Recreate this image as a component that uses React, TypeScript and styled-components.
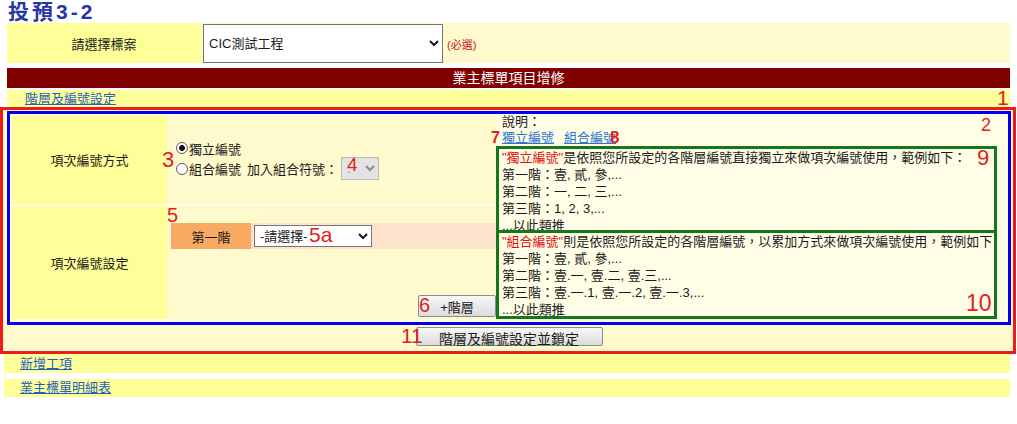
import React from "react";
import styled, { createGlobalStyle } from "styled-components";

const GlobalStyle = createGlobalStyle`
  html, body { margin: 0; padding: 0; background: #ffffff; }
  body {
    font-family: "Liberation Sans", "Noto Sans CJK TC", sans-serif;
    font-size: 13px;
    color: #1a1a1a;
  }
  * { box-sizing: border-box; }
`;

const FONT = `"Liberation Sans", "Noto Sans CJK TC", sans-serif`;

const Page = styled.div`
  position: relative;
  width: 1017px;
  height: 424px;
  padding: 0 7px;
  overflow: hidden;
`;

const Title = styled.h1`
  margin: 0 0 0 1px;
  height: 23px;
  line-height: 23px;
  font-size: 21px;
  font-weight: 700;
  letter-spacing: 3px;
  color: #2636a6;
`;

const ProjectRow = styled.div`
  display: grid;
  grid-template-columns: 194px 1fr;
  height: 40px;
`;

const YellowLabel = styled.div`
  background: #ffff99;
  display: flex;
  align-items: center;
  justify-content: center;
`;

const ProjectField = styled.div`
  background: #fffacd;
  display: flex;
  align-items: flex-start;
  gap: 4px;
  padding: 1px 0 0 2px;
`;

const NativeSelect = styled.select<{ $w: number; $h: number }>`
  width: ${(p) => p.$w}px;
  height: ${(p) => p.$h}px;
  font-family: ${FONT};
  font-size: 13px;
  color: #1a1a1a;
  background-color: #ffffff;
  border: 1px solid #767676;
  border-radius: 0;
  padding: 0 1px;
  margin: 0;
`;

const SymbolSelect = styled(NativeSelect)`
  background-color: #e3e3e3;
  border-color: #b9b9b9;
  color: #8a8a8a;
  margin-left: 3px;
`;

const Required = styled.span`
  align-self: center;
  font-size: 11px;
  color: #cc1616;
`;

const HeaderBar = styled.div`
  margin-top: 5px;
  height: 20px;
  line-height: 20px;
  background: #800000;
  color: #ffffff;
  font-size: 14px;
  text-align: center;
`;

const LinkRow = styled.div<{ $indent: number; $h: number; $top: number; $shift?: number }>`
  margin-top: ${(p) => p.$top}px;
  margin-left: ${(p) => -(p.$shift || 0)}px;
  height: ${(p) => p.$h}px;
  line-height: ${(p) => p.$h}px;
  background: #ffff99;
  padding-left: ${(p) => p.$indent}px;
`;

const Link = styled.a`
  color: #1f5fc0;
  text-decoration: underline;
  cursor: pointer;
`;

const RedFrame = styled.section`
  margin: 0 -6px 0 -7px;
  border: 3px solid #ee1b1b;
  padding: 1px 2px 0 4px;
  background: #fffacd;
`;

const BlueFrame = styled.div`
  border: 3px solid #0000ee;
  background: #fffde6;
  padding: 1px 3px 3px 2px;
  display: grid;
  grid-template-columns: 155px 329px 1fr;
  grid-template-rows: 89px 113px;
  row-gap: 2px;
`;

const SettingLabel = styled(YellowLabel)<{ $row: number }>`
  grid-column: 1;
  grid-row: ${(p) => p.$row};
`;

const ModeCell = styled.div`
  grid-column: 2;
  grid-row: 1;
  background: #fffacd;
  display: flex;
  flex-direction: column;
  justify-content: center;
  padding-left: 9px;
`;

const ModeLine = styled.label<{ $h: number }>`
  display: flex;
  align-items: center;
  height: ${(p) => p.$h}px;
  white-space: nowrap;
`;

const Radio = styled.input`
  appearance: none;
  width: 12px;
  height: 12px;
  margin: 0 1px 0 0;
  border: 1px solid #5c5c5c;
  border-radius: 50%;
  background: #ffffff;
  &:checked {
    background: radial-gradient(circle, #111 0 2.6px, #fff 3.2px);
  }
`;

const Spaced = styled.span`
  margin-left: 6px;
`;

const LevelCell = styled.div`
  grid-column: 2;
  grid-row: 2;
  background: #fffacd;
  display: flex;
  flex-direction: column;
  justify-content: space-between;
  padding: 17px 0 2px 4px;
`;

const LevelRow = styled.div`
  display: flex;
  align-items: center;
  height: 26px;
  background: #fde3cb;
`;

const LevelTag = styled.div`
  width: 80px;
  height: 100%;
  background: #f9aa62;
  display: flex;
  align-items: center;
  justify-content: center;
  margin-right: 3px;
`;

const GreyButton = styled.button<{ $w: number; $h: number; $fs: number }>`
  width: ${(p) => p.$w}px;
  height: ${(p) => p.$h}px;
  font-family: ${FONT};
  font-size: ${(p) => p.$fs}px;
  color: #1a1a1a;
  padding: 0;
  background: linear-gradient(#f7f7f7, #dcdcdc);
  border: 1px solid #8c8c8c;
  border-radius: 2px;
`;

const AddLevel = styled(GreyButton)`
  align-self: flex-end;
`;

const Explain = styled.div`
  grid-column: 3;
  grid-row: 1 / span 2;
  margin-top: -1px;
  display: flex;
  flex-direction: column;
  align-items: flex-start;
`;

const ExplainLine = styled.div`
  padding-left: 6px;
  line-height: 16px;
  height: 16px;
  display: flex;
  gap: 10px;
`;

const ExplainLink = styled.a`
  color: #2b72d2;
  text-decoration: underline;
`;

const GreenBox = styled.div<{ $h: number; $open?: boolean }>`
  width: 501px;
  height: ${(p) => p.$h}px;
  border: 3px solid #14781a;
  border-bottom-width: ${(p) => (p.$open ? 0 : 3)}px;
  padding-left: 3px;
  line-height: 17px;
  white-space: nowrap;
  overflow: hidden;
`;

const Hot = styled.span`
  color: #e01010;
`;

const LockRow = styled.div`
  display: flex;
  justify-content: center;
  padding: 2px 0 5px;
`;

const Marker = styled.span<{ $x: number; $y: number; $size: number; $bold?: boolean }>`
  position: absolute;
  left: ${(p) => p.$x}px;
  top: ${(p) => p.$y}px;
  font-family: "Liberation Sans", sans-serif;
  font-size: ${(p) => p.$size}px;
  font-weight: ${(p) => (p.$bold ? 700 : 400)};
  line-height: 1;
  color: #e3201b;
  pointer-events: none;
`;

const markers: { t: string; x: number; y: number; s: number; b?: boolean }[] = [
  { t: "1", x: 997, y: 87, s: 21 },
  { t: "2", x: 981, y: 116, s: 18 },
  { t: "3", x: 162, y: 149, s: 22 },
  { t: "4", x: 347, y: 155, s: 19 },
  { t: "5", x: 167, y: 205, s: 20 },
  { t: "5a", x: 309, y: 224, s: 21 },
  { t: "6", x: 419, y: 295, s: 20 },
  { t: "7", x: 491, y: 130, s: 16, b: true },
  { t: "8", x: 610, y: 129, s: 17, b: true },
  { t: "9", x: 977, y: 147, s: 22 },
  { t: "10", x: 966, y: 292, s: 23 },
  { t: "11", x: 401, y: 325, s: 21 },
];

export default function App() {
  return (
    <Page>
      <GlobalStyle />
      <Title>投預3-2</Title>

      <ProjectRow>
        <YellowLabel>請選擇標案</YellowLabel>
        <ProjectField>
          <NativeSelect $w={240} $h={39} defaultValue="cic">
            <option value="cic">CIC測試工程</option>
          </NativeSelect>
          <Required>(必選)</Required>
        </ProjectField>
      </ProjectRow>

      <HeaderBar>業主標單項目增修</HeaderBar>

      <LinkRow $indent={18} $h={17} $top={2}>
        <Link>階層及編號設定</Link>
      </LinkRow>

      <RedFrame>
        <BlueFrame>
          <SettingLabel $row={1}>項次編號方式</SettingLabel>
          <ModeCell>
            <ModeLine $h={18}>
              <Radio type="radio" name="mode" defaultChecked />
              獨立編號
            </ModeLine>
            <ModeLine $h={23}>
              <Radio type="radio" name="mode" />
              組合編號
              <Spaced>加入組合符號：</Spaced>
              <SymbolSelect $w={38} $h={23} defaultValue=".">
                <option value=".">.</option>
              </SymbolSelect>
            </ModeLine>
          </ModeCell>

          <SettingLabel $row={2}>項次編號設定</SettingLabel>
          <LevelCell>
            <LevelRow>
              <LevelTag>第一階</LevelTag>
              <NativeSelect $w={118} $h={22} defaultValue="">
                <option value="">-請選擇-</option>
              </NativeSelect>
            </LevelRow>
            <AddLevel $w={78} $h={22} $fs={13}>+階層</AddLevel>
          </LevelCell>

          <Explain>
            <ExplainLine>說明：</ExplainLine>
            <ExplainLine>
              <ExplainLink>獨立編號</ExplainLink>
              <ExplainLink>組合編號</ExplainLink>
            </ExplainLine>
            <GreenBox $h={84} $open>
              <div>
                <Hot>"獨立編號"</Hot>是依照您所設定的各階層編號直接獨立來做項次編號使用，範例如下：
              </div>
              <div>第一階：壹, 貳, 參,...</div>
              <div>第二階：一, 二, 三,...</div>
              <div>第三階：1, 2, 3,...</div>
              <div>...以此類推</div>
            </GreenBox>
            <GreenBox $h={90}>
              <div>
                <Hot>"組合編號"</Hot>則是依照您所設定的各階層編號，以累加方式來做項次編號使用，範例如下：
              </div>
              <div>第一階：壹, 貳, 參,...</div>
              <div>第二階：壹.一, 壹.二, 壹.三,...</div>
              <div>第三階：壹.一.1, 壹.一.2, 壹.一.3,...</div>
              <div>...以此類推</div>
            </GreenBox>
          </Explain>
        </BlueFrame>
        <LockRow>
          <GreyButton $w={187} $h={19} $fs={14}>階層及編號設定並鎖定</GreyButton>
        </LockRow>
      </RedFrame>

      <LinkRow $indent={16} $h={19} $top={0} $shift={3}>
        <Link>新增工項</Link>
      </LinkRow>
      <LinkRow $indent={16} $h={18} $top={6} $shift={3}>
        <Link>業主標單明細表</Link>
      </LinkRow>

      {markers.map((m) => (
        <Marker key={m.t} $x={m.x} $y={m.y} $size={m.s} $bold={m.b}>
          {m.t}
        </Marker>
      ))}
    </Page>
  );
}
